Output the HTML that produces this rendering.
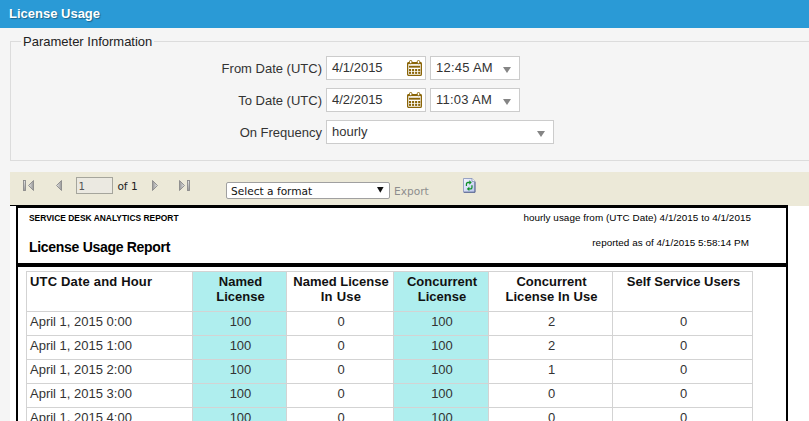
<!DOCTYPE html>
<html>
<head>
<meta charset="utf-8">
<title>License Usage</title>
<style>
html,body{margin:0;padding:0;}
body{width:809px;height:421px;overflow:hidden;background:#f5f5f5;font-family:"Liberation Sans",Arial,sans-serif;font-size:13px;color:#333;position:relative;}
.abs{position:absolute;}
#hdr{left:0;top:0;width:809px;height:28px;background:#2a9ad6;}
#hdr span{position:absolute;left:9px;top:6px;font-weight:bold;font-size:13px;line-height:15px;color:#fff;text-shadow:1px 1px 1px rgba(0,0,0,.35);white-space:nowrap;}
#fs{left:10px;top:41px;width:820px;height:118px;border:1px solid #dcdcdc;}
#legend{left:21px;top:34px;height:16px;padding:0 2px;background:#f5f5f5;font-size:13px;line-height:16px;color:#222;white-space:nowrap;}
.lbl{width:200px;text-align:right;font-size:13px;line-height:16px;color:#333;white-space:nowrap;}
.inp{background:#fff;border:1px solid #ccc;box-sizing:border-box;height:24px;font-size:13px;line-height:22px;color:#333;padding-left:5px;white-space:nowrap;}
.arr{position:absolute;width:0;height:0;border-left:4.5px solid transparent;border-right:4.5px solid transparent;border-top:6px solid #858585;}
#tb{left:10px;top:172px;width:799px;height:33px;background:#ece9d8;}
#rep{left:10px;top:205px;width:799px;height:216px;background:#fff;}
.tah{font-family:"DejaVu Sans","Liberation Sans",sans-serif;}
#t1{font-weight:bold;font-size:9.7px;line-height:12px;color:#000;white-space:nowrap;transform:scaleX(0.87);transform-origin:0 0;}
#t2{font-weight:bold;font-size:14px;line-height:16px;color:#000;white-space:nowrap;letter-spacing:-0.3px;}
#t3,#t4{font-size:9.9px;line-height:12px;color:#000;white-space:nowrap;}
#grid{table-layout:fixed;border-collapse:collapse;font-size:13px;line-height:15px;color:#333;}
#grid th,#grid td{border:1px solid #d3d3d3;padding:2px 2px 0 4px;vertical-align:top;text-align:center;box-sizing:border-box;}
#grid th{height:40px;font-weight:bold;color:#111;}
#grid td{height:24px;}
#grid .l{text-align:left;padding-left:3px;}
#grid .c{background:#afeeee;}

</style>
</head>
<body>
<div id="hdr" class="abs"><span>License Usage</span></div>

<div id="fs" class="abs"></div>
<div id="legend" class="abs">Parameter Information</div>

<div class="abs lbl" style="left:122px;top:61px;">From Date (UTC)</div>
<div class="abs inp" style="left:326px;top:56px;width:100px;">4/1/2015</div>
<svg class="abs" style="left:407px;top:60px;" width="15" height="16" viewBox="0 0 15 16"><rect x="0.65" y="2.55" width="13.7" height="12.8" rx="1.2" fill="#fff" stroke="#8a6508" stroke-width="1.3"/><rect x="0.65" y="2.2" width="13.7" height="1.9" fill="#8a6508"/><rect x="2.5" y="0.5" width="2.4" height="3.2" rx="1.1" fill="#fff" stroke="#8a6508" stroke-width="1"/><rect x="10.3" y="0.5" width="2.4" height="3.2" rx="1.1" fill="#fff" stroke="#8a6508" stroke-width="1"/><rect x="2.0" y="5.75" width="11.1" height="1.9" fill="#8a6508"/><g fill="#8a6508"><rect x="2.00" y="9.00" width="2.1" height="2.1"/><rect x="5.05" y="9.00" width="2.1" height="2.1"/><rect x="8.10" y="9.00" width="2.1" height="2.1"/><rect x="11.15" y="9.00" width="2.1" height="2.1"/><rect x="2.00" y="11.80" width="2.1" height="2.1"/><rect x="5.05" y="11.80" width="2.1" height="2.1"/><rect x="8.10" y="11.80" width="2.1" height="2.1"/><rect x="11.15" y="11.80" width="2.1" height="2.1"/></g></svg>
<div class="abs inp" style="left:430px;top:56px;width:90px;letter-spacing:0.25px;">12:45 AM<i class="arr" style="left:72px;top:10px;"></i></div>

<div class="abs lbl" style="left:122px;top:93px;">To Date (UTC)</div>
<div class="abs inp" style="left:326px;top:88px;width:100px;">4/2/2015</div>
<svg class="abs" style="left:407px;top:92px;" width="15" height="16" viewBox="0 0 15 16"><rect x="0.65" y="2.55" width="13.7" height="12.8" rx="1.2" fill="#fff" stroke="#8a6508" stroke-width="1.3"/><rect x="0.65" y="2.2" width="13.7" height="1.9" fill="#8a6508"/><rect x="2.5" y="0.5" width="2.4" height="3.2" rx="1.1" fill="#fff" stroke="#8a6508" stroke-width="1"/><rect x="10.3" y="0.5" width="2.4" height="3.2" rx="1.1" fill="#fff" stroke="#8a6508" stroke-width="1"/><rect x="2.0" y="5.75" width="11.1" height="1.9" fill="#8a6508"/><g fill="#8a6508"><rect x="2.00" y="9.00" width="2.1" height="2.1"/><rect x="5.05" y="9.00" width="2.1" height="2.1"/><rect x="8.10" y="9.00" width="2.1" height="2.1"/><rect x="11.15" y="9.00" width="2.1" height="2.1"/><rect x="2.00" y="11.80" width="2.1" height="2.1"/><rect x="5.05" y="11.80" width="2.1" height="2.1"/><rect x="8.10" y="11.80" width="2.1" height="2.1"/><rect x="11.15" y="11.80" width="2.1" height="2.1"/></g></svg>
<div class="abs inp" style="left:430px;top:88px;width:90px;letter-spacing:0.25px;">11:03 AM<i class="arr" style="left:72px;top:10px;"></i></div>

<div class="abs lbl" style="left:122px;top:125px;">On Frequency</div>
<div class="abs inp" style="left:326px;top:120px;width:228px;">hourly<i class="arr" style="left:210px;top:10px;"></i></div>

<div id="tb" class="abs">
<svg class="abs" style="left:0;top:0;" width="260" height="33" viewBox="0 0 260 33">
<defs>
<linearGradient id="gl" x1="0" x2="1" y1="0" y2="0"><stop offset="0" stop-color="#e6e6e6"/><stop offset="1" stop-color="#969696"/></linearGradient>
<linearGradient id="gr" x1="0" x2="1" y1="0" y2="0"><stop offset="0" stop-color="#969696"/><stop offset="1" stop-color="#e6e6e6"/></linearGradient>
<linearGradient id="gb" x1="0" x2="0" y1="0" y2="1"><stop offset="0" stop-color="#e4e4e4"/><stop offset="1" stop-color="#9a9a9a"/></linearGradient>
</defs>
<g stroke="#8a8a8a" stroke-width="0.9" stroke-linejoin="miter">
<rect x="13.5" y="8.5" width="2" height="10" fill="url(#gb)"/>
<polygon points="18.5,13.5 23.5,8.5 23.5,18.5" fill="url(#gl)"/>
<polygon points="46.5,13.5 51.5,8.5 51.5,18.5" fill="url(#gl)"/>
<polygon points="147.5,13.5 142.5,8.5 142.5,18.5" fill="url(#gr)"/>
<polygon points="174.5,13.5 169.5,8.5 169.5,18.5" fill="url(#gr)"/>
<rect x="177.5" y="8.5" width="2" height="10" fill="url(#gb)"/>
</g>
</svg>
<div class="abs tah" style="left:66px;top:5px;width:37px;height:17px;box-sizing:border-box;border:1px solid #a5a59c;background:#ebe9e1;font-size:10.2px;line-height:16px;padding-top:1px;height:17px;overflow:visible;padding-left:1.5px;color:#555;">1</div>
<div class="abs tah" style="left:107.4px;top:6px;font-size:10.6px;line-height:16px;color:#222;white-space:nowrap;">of 1</div>
<div class="abs tah" style="left:216px;top:10px;width:164px;height:17px;box-sizing:border-box;border:1px solid #a0a0a0;border-radius:2px;background:#fff;font-size:10.6px;line-height:16px;padding-left:4px;color:#111;white-space:nowrap;">Select a format<svg class="abs" style="left:149.7px;top:4px;" width="7" height="6" viewBox="0 0 7 6"><polygon points="0,0 6.6,0 3.3,5.8" fill="#111"/></svg></div>
<div class="abs tah" style="left:384px;top:11px;font-size:10.6px;line-height:16px;color:#8d8d8d;white-space:nowrap;">Export</div>
<svg class="abs" style="left:453px;top:6px;" width="14" height="16" viewBox="0 0 14 16">
<defs><linearGradient id="pg" x1="0" x2="1" y1="0" y2="1"><stop offset="0" stop-color="#f4f6ff"/><stop offset="1" stop-color="#bcc6ee"/></linearGradient></defs>
<g transform="scale(0.952,0.978)"><path d="M0.5 0.5 H9.5 L12.5 3.5 V14.5 H0.5 Z" fill="url(#pg)" stroke="#939fc2" stroke-width="1"/>
<path d="M9.5 0.5 V3.5 H12.5" fill="#fff" stroke="#7d8cb0" stroke-width="0.8"/>
<path d="M1 14.6 H12.6 V4" fill="none" stroke="#56648e" stroke-width="1"/>
<g fill="none" stroke="#109028" stroke-width="1.3">
<path d="M3.6 8.2 V6.2 Q3.6 4.6 5.2 4.6 H7.2"/>
<path d="M9.4 7.4 V9.6 Q9.4 11.2 7.8 11.2 H6"/>
</g>
<polygon points="6.6,2.4 9.2,4.6 6.6,6.8" fill="#109028"/>
<polygon points="6.6,9 4,11.2 6.6,13.4" fill="#109028"/></g>
</svg>
</div>
<div id="rep" class="abs">
<div class="abs" style="left:0;top:0;width:778px;height:1px;background:#000;"></div><div class="abs" style="left:778px;top:0;width:21px;height:1px;background:#ece9d8;"></div>
<div class="abs" style="left:6px;top:1px;width:768px;height:55px;border:2px solid #000;"></div>
<div class="abs" style="left:6px;top:60px;width:768px;height:200px;border:2px solid #000;border-bottom:none;"></div>
<div class="abs" id="t1" style="left:19px;top:7px;">SERVICE DESK ANALYTICS REPORT</div>
<div class="abs" id="t2" style="left:19px;top:34px;">License Usage Report</div>
<div class="abs" id="t3" style="right:58px;top:7px;letter-spacing:0.04px;">hourly usage from (UTC Date) 4/1/2015 to 4/1/2015</div>
<div class="abs" id="t4" style="right:60px;top:32px;letter-spacing:0.04px;">reported as of 4/1/2015 5:58:14 PM</div>
<table class="abs" id="grid" style="left:16px;top:66px;">
<colgroup><col style="width:166px"><col style="width:94px"><col style="width:107px"><col style="width:95px"><col style="width:124px"><col style="width:140px"></colgroup>
<tr class="h"><th class=" l" style="letter-spacing:0.18px">UTC Date and Hour</th><th class="c">Named<br>License</th><th class="">Named License<br><span style="letter-spacing:0.25px">In Use</span></th><th class="c">Concurrent<br>License</th><th class="">Concurrent<br><span style="letter-spacing:0.08px">License In Use</span></th><th class="">Self Service Users</th></tr>
<tr><td class=" l">April 1, 2015 0:00</td><td class="c">100</td><td class="">0</td><td class="c">100</td><td class="">2</td><td class="">0</td></tr>
<tr><td class=" l">April 1, 2015 1:00</td><td class="c">100</td><td class="">0</td><td class="c">100</td><td class="">2</td><td class="">0</td></tr>
<tr><td class=" l">April 1, 2015 2:00</td><td class="c">100</td><td class="">0</td><td class="c">100</td><td class="">1</td><td class="">0</td></tr>
<tr><td class=" l">April 1, 2015 3:00</td><td class="c">100</td><td class="">0</td><td class="c">100</td><td class="">0</td><td class="">0</td></tr>
<tr><td class=" l">April 1, 2015 4:00</td><td class="c">100</td><td class="">0</td><td class="c">100</td><td class="">0</td><td class="">0</td></tr>
</table>
</div>
</body>
</html>
